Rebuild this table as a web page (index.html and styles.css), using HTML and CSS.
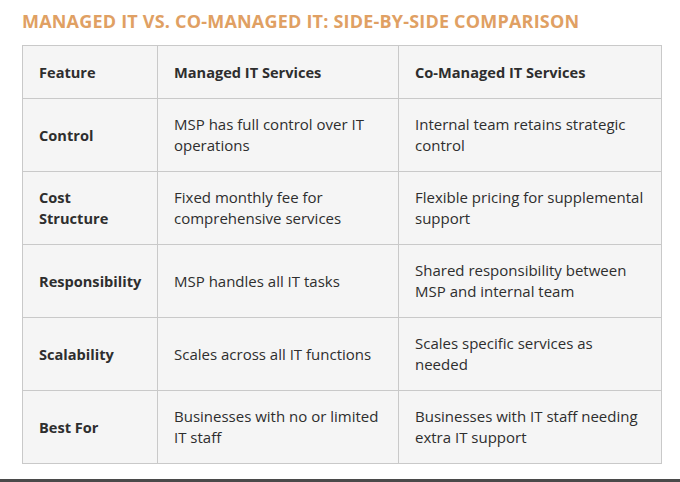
FILE: index.html
```html
<!DOCTYPE html>
<html>
<head>
<meta charset="utf-8">
<link rel="stylesheet" href="styles.css">
</head>
<body>
<div class="page">
  <h2 class="title">MANAGED IT VS. CO-MANAGED IT: SIDE-BY-SIDE COMPARISON</h2>
  <table class="cmp">
    <colgroup>
      <col class="c1"><col class="c2"><col class="c3">
    </colgroup>
    <thead>
      <tr><th>Feature</th><th>Managed IT Services</th><th>Co-Managed IT Services</th></tr>
    </thead>
    <tbody>
      <tr><th>Control</th><td>MSP has full control over IT operations</td><td>Internal team retains strategic control</td></tr>
      <tr><th>Cost Structure</th><td>Fixed monthly fee for comprehensive services</td><td>Flexible pricing for supplemental support</td></tr>
      <tr><th>Responsibility</th><td>MSP handles all IT tasks</td><td>Shared responsibility between MSP and internal team</td></tr>
      <tr><th>Scalability</th><td>Scales across all IT functions</td><td>Scales specific services as needed</td></tr>
      <tr><th>Best For</th><td>Businesses with no or limited IT staff</td><td>Businesses with IT staff needing extra IT support</td></tr>
    </tbody>
  </table>
  <div class="bottom-bar"></div>
</div>
</body>
</html>
```
FILE: styles.css
```css
html, body {
  margin: 0;
  padding: 0;
  background: #ffffff;
}
.page {
  width: 680px;
  height: 482px;
  overflow: hidden;
  font-family: "Open Sans", "Liberation Sans", sans-serif;
  color: #2e2e2e;
  display: flex;
  flex-direction: column;
}
.title {
  margin: 9px 0 0 22px;
  font-size: 18px;
  line-height: 24px;
  font-weight: 700;
  color: #e0a063;
  letter-spacing: 0.2px;
  height: 36px;
}
.cmp {
  margin-left: 22px;
  width: 639px;
  border-collapse: collapse;
  table-layout: fixed;
  background: #f5f5f5;
  font-size: 15px;
  line-height: 21px;
}
.c1 { width: 135px; }
.c2 { width: 241px; }
.c3 { width: 263px; }
.cmp th, .cmp td {
  border: 1.5px solid #c9c9c9;
  padding: 0 16px;
  text-align: left;
  vertical-align: middle;
}
.cmp th {
  font-weight: 700;
  font-size: 14.6px;
}
.cmp td {
  font-weight: 400;
}
.cmp thead th {
  height: 52px;
}
.cmp tbody tr {
  height: 73px;
}
.bottom-bar {
  margin-top: auto;
  height: 3px;
  background: #4a4a4a;
}
```
